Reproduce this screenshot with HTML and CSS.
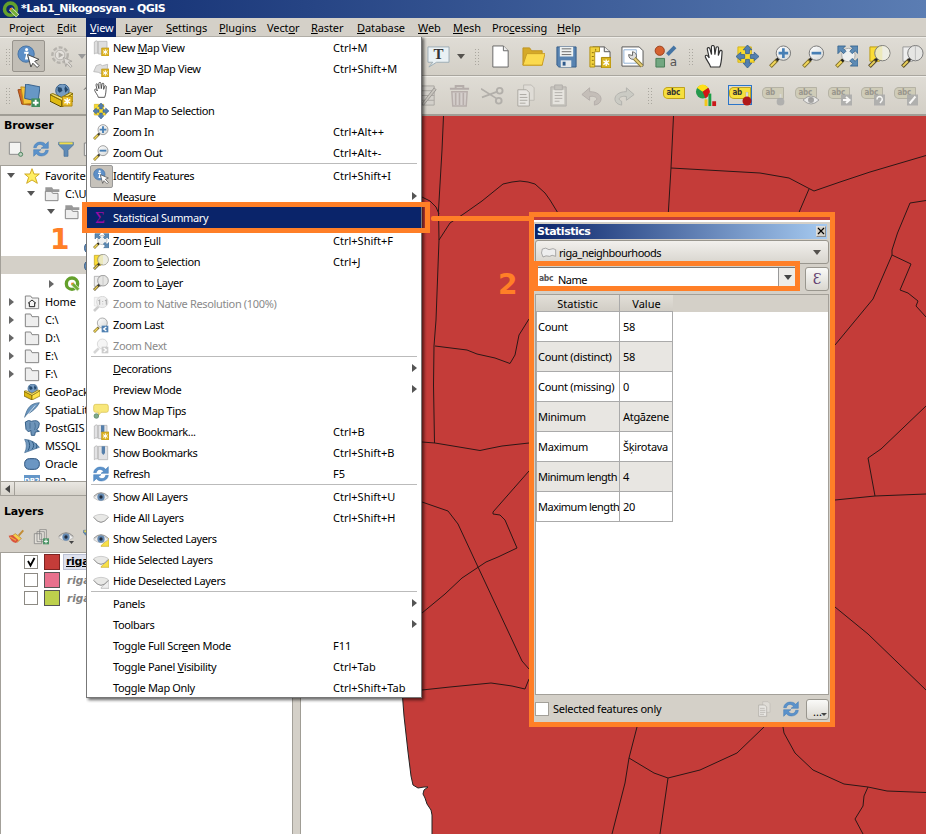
FILE: index.html
```html
<!DOCTYPE html>
<html lang="en">
<head>
<meta charset="utf-8">
<title>*Lab1_Nikogosyan - QGIS</title>
<link rel="stylesheet" href="styles.css">
</head>
<body>
<svg class="defs" aria-hidden="true">
  <defs>
    <linearGradient id="lens" x1="0" y1="0" x2="1" y2="1"><stop offset="0" stop-color="#fff"/><stop offset="1" stop-color="#d5d8d8"/></linearGradient>
    <symbol id="qgis" viewBox="0 0 24 24"><circle cx="12" cy="11.500" r="8.500" fill="none" stroke="#64a02c" stroke-width="5"/><path d="M12 11l10 10" stroke="#d9e6c8" stroke-width="6"/><path d="M13 12l8.500 8.500" stroke="#73ae35" stroke-width="4"/><path d="M11 10h4l-4 4z" fill="#ee7913"/></symbol>
    <symbol id="identify" viewBox="0 0 24 24"><circle cx="9.500" cy="9.500" r="8.500" fill="#5d8fc7" stroke="#4573a5"/><circle cx="10" cy="4.800" r="1.600" fill="#fff"/><path d="M7.500 8h3.500l-1.500 6h2" fill="none" stroke="#fff" stroke-width="2"/><path d="M11 10l12 5-4.500 2 4.500 4.500-2 2-4.500-4.500-2 4z" fill="#fff" stroke="#444"/></symbol>
    <symbol id="gear" viewBox="0 0 24 24"><circle cx="10.500" cy="10.500" r="8" fill="#d8d5cf" stroke="#b5b2ac" stroke-width="2.500" stroke-dasharray="4 2"/><circle cx="10.500" cy="10.500" r="5" fill="#e4e1dc" stroke="#b5b2ac"/><path d="M9 7.500l5 3-5 3z" fill="#b0ada7"/><path d="M14 13l9 4-4 1 4 4-1.500 1.500-4-4-1 3z" fill="#dedbd6" stroke="#aaa7a2"/></symbol>
    <symbol id="zin" viewBox="0 0 24 24"><path d="M1.500 22.500l7-7" stroke="#80712d" stroke-width="4"/><path d="M2 22l5-5" stroke="#f4d95b" stroke-width="2"/><path d="M8 16l3-3" stroke="#222" stroke-width="3"/><circle cx="15" cy="8.500" r="7.500" fill="url(#lens)" stroke="#777"/><path d="M15 3.500v10M10 8.500h10" stroke="#477fb5" stroke-width="2.800"/></symbol>
    <symbol id="zout" viewBox="0 0 24 24"><path d="M1.500 22.500l7-7" stroke="#80712d" stroke-width="4"/><path d="M2 22l5-5" stroke="#f4d95b" stroke-width="2"/><path d="M8 16l3-3" stroke="#222" stroke-width="3"/><circle cx="15" cy="8.500" r="7.500" fill="url(#lens)" stroke="#777"/><path d="M10 8.500h10" stroke="#477fb5" stroke-width="2.800"/></symbol>
    <symbol id="zfull" viewBox="0 0 24 24"><path d="M1.500 22.500l7-7" stroke="#80712d" stroke-width="4"/><path d="M2 22l5-5" stroke="#f4d95b" stroke-width="2"/><path d="M7 17l3-3" stroke="#222" stroke-width="3"/><circle cx="14" cy="10.500" r="7" fill="#eef0f0" stroke="#aaa"/><path d="M3 1h8l-2.500 2.500 3 3-2.500 2.500-3-3L3 9zM24 1h-8l2.500 2.500-3 3 2.500 2.500 3-3L24 9zM24 22h-8l2.500-2.500-3-3 2.500-2.500 3 3 3-3z" fill="#5d8bb5" stroke="#315e88" stroke-width=".8"/></symbol>
    <symbol id="zsel" viewBox="0 0 24 24"><path d="M2 2h10v15H2z" fill="#fbdd35" stroke="#ba9c17"/><path d="M1.500 22.500l7-7" stroke="#574b29" stroke-width="4"/><path d="M2 22l5-5" stroke="#e9cf58" stroke-width="2"/><path d="M8 16l3-3" stroke="#222" stroke-width="3"/><circle cx="15" cy="8.500" r="8" fill="#ece9bb" stroke="#777"/><path d="M15 1a7.500 7.500 0 0 1 0 15z" fill="#eee" opacity=".8"/></symbol>
    <symbol id="zlayer" viewBox="0 0 24 24"><path d="M2 2h10v15H2z" fill="#eee" stroke="#999"/><path d="M1.500 22.500l7-7" stroke="#574b29" stroke-width="4"/><path d="M2 22l5-5" stroke="#e9cf58" stroke-width="2"/><path d="M8 16l3-3" stroke="#222" stroke-width="3"/><circle cx="15" cy="8.500" r="8" fill="#e6e6e4" stroke="#777"/><path d="M15 1v15" stroke="#bbb"/></symbol>
    <symbol id="znative" viewBox="0 0 24 24"><path d="M1.500 22.500l7-7" stroke="#ccc" stroke-width="4"/><path d="M2 2h8v13H2z" fill="#f4f4f4" stroke="#ddd"/><circle cx="14" cy="9" r="8.500" fill="#eee" stroke="#ccc"/><path d="M8 7l2-1v7M18 7l2-1v7M14.500 8v1M14.500 11.500v1" fill="none" stroke="#aaa" stroke-width="1.600"/></symbol>
    <symbol id="zlast" viewBox="0 0 24 24"><path d="M1.500 22.500l7-7" stroke="#80712d" stroke-width="4"/><path d="M2 22l5-5" stroke="#f4d95b" stroke-width="2"/><circle cx="14" cy="9" r="7.500" fill="url(#lens)" stroke="#888"/><path d="M13 13h10v10H13z" fill="#4f80b2"/><path d="M20 15l-4 3 4 3" fill="none" stroke="#fff" stroke-width="2"/></symbol>
    <symbol id="znext" viewBox="0 0 24 24"><path d="M1.500 22.500l7-7" stroke="#d5d5d5" stroke-width="4"/><circle cx="14" cy="9" r="7.500" fill="#f5f5f5" stroke="#ccc"/><path d="M13 13h10v10H13z" fill="#ccc"/><path d="M16 15l4 3-4 3" fill="none" stroke="#fff" stroke-width="2"/></symbol>
    <symbol id="hand" viewBox="0 0 24 24"><path d="M8 23c-1-4-4.500-7-5.500-10.500-.5-2.500 2-2.500 4 1L4.500 4.500c-.4-2 2.200-2.500 2.700-.5l1.700 6L8.800 2c0-2 2.900-2 3 0l.6 8 1.200-7c.3-1.800 2.700-1.500 2.600.3L16 11l1.500-4.500c.6-1.600 2.600-1 2.400.7-.4 5-.4 11-2.400 15.800z" fill="#fff" stroke="#333" stroke-width="1.200"/></symbol>
    <symbol id="pan" viewBox="0 0 24 24"><path d="M2 2h14v9h3v7H2z" fill="#f7da2f" stroke="#d4b41b"/><path d="M12 0l4.500 5H14v4h-4V5H7.500zM12 24l4.500-5H14v-4h-4v4H7.500zM0 12l5-4.500V10h4v4H5v2.500zM24 12l-5-4.500V10h-4v4h4v2.500z" fill="#5480b0" stroke="#315d8d" stroke-width=".8"/></symbol>
    <symbol id="mapnew" viewBox="0 0 24 24"><path d="M2 3q3-3 5-1v18q-3-1-5 1zM8 2h13v19H8z" fill="#dedede" stroke="#aaa"/><path d="M13 12h11v12H13z" fill="#dfb525" stroke="#b89112"/><path d="M18.500 14v8M15 16l7 4M22 16l-7 4" stroke="#fff" stroke-width="1.500"/></symbol>
    <symbol id="mapnew3" viewBox="0 0 24 24"><path d="M1 16l4-9 6-2 3 2 8-2-1 13-9 1-4-2z" fill="#dedede" stroke="#aaa"/><path d="M13 12h11v12H13z" fill="#dfb525" stroke="#b89112"/><path d="M18.500 14v8M15 16l7 4M22 16l-7 4" stroke="#fff" stroke-width="1.500"/></symbol>
    <symbol id="bookmark" viewBox="0 0 24 24"><path d="M2 3q3-3 5-1v19q-3-1-5 1zM8 2h14v20H8z" fill="#e2e2e4" stroke="#aaa"/><path d="M13 2h5v10l-2.500 3-2.500-3z" fill="#557fab"/></symbol>
    <symbol id="booknew" viewBox="0 0 24 24"><path d="M2 3q3-3 5-1v19q-3-1-5 1zM8 2h13v20H8z" fill="#e2e2e4" stroke="#aaa"/><path d="M12 2h5v9l-2.500 3-2.500-3z" fill="#557fab"/><path d="M13 12h11v12H13z" fill="#dfb525" stroke="#b89112"/><path d="M18.500 14v8M15 16l7 4M22 16l-7 4" stroke="#fff" stroke-width="1.500"/></symbol>
    <symbol id="tips" viewBox="0 0 24 24"><path d="M4 2h16q3 0 3 3v6q0 3-3 3h-8l-4 5v-5H4q-3 0-3-3V5q0-3 3-3z" fill="#f8e77a" stroke="#d4bd48"/><circle cx="5" cy="19.500" r="3.500" fill="#7fa98a" stroke="#507e5c"/></symbol>
    <symbol id="refresh" viewBox="0 0 24 24"><path d="M1 10C2 1 14-1 19 5l4-4v10H12l4-3C11 3 6 5 5 10z" fill="#5b92cb" stroke="#427bb5" stroke-width=".8"/><path d="M23 14c-1 9-13 11-18 5l-4 4V13h11l-4 3c5 5 10 3 11-2z" fill="#5b92cb" stroke="#427bb5" stroke-width=".8"/></symbol>
    <symbol id="eye" viewBox="0 0 24 24"><path d="M1 13Q12 0 23 13 12 22 1 13z" fill="#eee" stroke="#aaa"/><circle cx="12" cy="12" r="5.500" fill="#6389b2"/><circle cx="12" cy="12" r="2.500" fill="#222c3c"/><path d="M1 11Q12 0 23 11" fill="none" stroke="#888" stroke-width="1.400"/></symbol>
    <symbol id="lid" viewBox="0 0 24 24"><path d="M2 9q10-5 20 0l1 2q-11 15-22 0z" fill="#e8e8e6" stroke="#bbb"/><path d="M1 11q11 15 22 0" fill="none" stroke="#999" stroke-width="1.500"/></symbol>
    <symbol id="yellowtag" viewBox="0 0 24 24"><path d="M12 22l12-11v12H12z" fill="#f7df48" stroke="#c5a927"/></symbol>
    <symbol id="greytag" viewBox="0 0 24 24"><path d="M12 22l12-11v12H12z" fill="#eee" stroke="#aaa"/></symbol>
    <symbol id="file" viewBox="0 0 24 24"><path d="M4 1h11l5 5v17H4z" fill="#fff" stroke="#666"/><path d="M15 1v5h5" fill="#eee" stroke="#666"/></symbol>
    <symbol id="open" viewBox="0 0 24 24"><path d="M1 21V3h7l2 3h11v15z" fill="#d5a928" stroke="#be9220"/><path d="M1 21L5 9h19l-3 12z" fill="#fbda4e" stroke="#c99d25"/></symbol>
    <symbol id="save" viewBox="0 0 24 24"><path d="M2 2h20v21H4l-2-2z" fill="#5783b1" stroke="#375e88"/><path d="M5 2h14v10H5z" fill="#eef2f2"/><path d="M7 4h10M7 7h10M7 10h10" stroke="#666"/><path d="M6 16h11v7H6z" fill="#e4e8ea"/><path d="M8 17.500h3v4H8z" fill="#2f5b8c"/></symbol>
    <symbol id="layout" viewBox="0 0 24 24"><path d="M5 2h12l6 5v15H5z" fill="#fff" stroke="#555"/><path d="M17 2v5h6" fill="#eee" stroke="#555"/><path d="M2 2h10v5H7v16H2z" fill="#f1d23e" stroke="#b28f12"/><path d="M4 8h2M4 12h2M4 16h2M4 20h2M8 4v2" stroke="#896d0d"/><path d="M14 13h10v11H14z" fill="#d9b521" stroke="#a98708"/><path d="M19 15v7M16 16.500l6 4M22 16.500l-6 4" stroke="#fff" stroke-width="1.400"/></symbol>
    <symbol id="wrench" viewBox="0 0 24 24"><path d="M1 2h18l4 4v16H1z" fill="#fff" stroke="#555"/><path d="M3 5h13v14H3z" fill="none" stroke="#8eafd3"/><path d="M8 10l4 1V7q5 1 4 6l-3 2q-5 0-5-5z" fill="#ddd" stroke="#666"/><path d="M14 14l8 8" stroke="#8b7a39" stroke-width="4"/><path d="M14 14l8 8" stroke="#e6cf78" stroke-width="2"/></symbol>
    <symbol id="styles" viewBox="0 0 24 24"><circle cx="6" cy="6" r="4.800" fill="#d6612f" stroke="#9b3d18"/><path d="M14 10l8-8" stroke="#4675a4" stroke-width="4"/><path d="M2 14h9v9H2z" fill="#72a781" stroke="#477b56"/></symbol>
    <symbol id="bubble" viewBox="0 0 24 24"><path d="M1 2h22v16H10l-8 5 4-5H1z" fill="#eaf1f4" stroke="#9cabb4"/></symbol>
    <symbol id="addlayer" viewBox="0 0 24 24"><path d="M1 6l10-1 3 17-9-1z" fill="#d36928" stroke="#984615"/><path d="M4 3l11 1 1 16-9 1z" fill="#f5c33a" stroke="#bd8b15"/><path d="M9 0l15 3-2 15-14-3z" fill="#6797c5" stroke="#355f8a"/><path d="M15 15h9v9h-9z" fill="#3f8d5c"/><path d="M19.500 16.500v6M16.500 19.500h6" stroke="#fff" stroke-width="2"/></symbol>
    <symbol id="box" viewBox="0 0 24 24"><circle cx="13" cy="7" r="7" fill="#759bc2" stroke="#355d87"/><path d="M8 3l4 1 1 3-3 2-2-2zM16 2l3 4-3 3-1-4z" fill="#24486c"/><path d="M0 11l12 6v7L0 18z" fill="#dfba12" stroke="#5a4700"/><path d="M12 17l12-7v8l-12 6z" fill="#ffe34a" stroke="#806906"/><path d="M0 11l3-1 9 4 9-5 3 1-12 7z" fill="#f7e26c" stroke="#806906"/></symbol>
    <symbol id="star" viewBox="0 0 24 24"><path d="M12 1l3 8h8l-6 5 3 9-8-5-8 5 3-9-6-5h8z" fill="#ffee62" stroke="#c99f13" stroke-width="1.300"/></symbol>
    <symbol id="folder" viewBox="0 0 24 24"><path d="M2 22V3h8l2 4h10v15z" fill="#eee" stroke="#858585" stroke-width="1.500"/></symbol>
    <symbol id="folder2" viewBox="0 0 24 24"><path d="M2 2h10l2 3h9v4H2z" fill="#999"/><path d="M2 22V8h9l2 3h8v11z" fill="#eee" stroke="#888" stroke-width="1.500"/></symbol>
    <symbol id="home" viewBox="0 0 24 24"><path d="M2 22V3h8l2 3h10v16z" fill="#f4f4f4" stroke="#777" stroke-width="1.300"/><path d="M6 14l6-5 6 5M8 13v6h8v-6" fill="none" stroke="#222" stroke-width="1.500"/></symbol>
    <symbol id="newdoc" viewBox="0 0 24 24"><path d="M2 2h17v18H2z" fill="#f4f4f2" stroke="#888" stroke-width="1.400"/><circle cx="19" cy="20" r="3" fill="#bed0bf" stroke="#4e8560" stroke-width="1.500"/></symbol>
    <symbol id="filter" viewBox="0 0 24 24"><path d="M1 2h22v4l-8 8v9H9v-9L1 6z" fill="#608bb6" stroke="#426b95"/><path d="M2 2h20v3H2z" fill="#f1dd4b"/></symbol>
    <symbol id="feather" viewBox="0 0 24 24"><path d="M1 23C5 7 11 2 23 1 20 8 12 15 5 18z" fill="#6a96bf" stroke="#365f84"/><path d="M2 23L17 5" stroke="#fff"/></symbol>
    <symbol id="postgis" viewBox="0 0 24 24"><path d="M2 3q5-4 9-1 10-3 12 3 0 6-4 10l4 2-6 1-1 5h-5l-1-8-3 3-4-4z" fill="#6d94b9" stroke="#365f87" stroke-width="1.500"/><path d="M9 4v9M16 4q2 5 0 11" fill="none" stroke="#365f87"/></symbol>
    <symbol id="mssql" viewBox="0 0 24 24"><path d="M1 2q14 1 22 12L1 22q5-10 0-20z" fill="#6f97bd" stroke="#416a91"/><path d="M6 3q5 8 0 16M12 5q5 6 0 12M18 8q3 4 0 8" fill="none" stroke="#305b82" stroke-width="1.500"/></symbol>
    <symbol id="oracle" viewBox="0 0 24 24"><rect x="1" y="4" width="22" height="16" rx="7" fill="#6b96c3" stroke="#284f7a" stroke-width="1.500"/></symbol>
    <symbol id="brush" viewBox="0 0 24 24"><path d="M16 10l7-8" stroke="#c28c35" stroke-width="3"/><path d="M11 7l9 7-6 6L5 11z" fill="#f6d04a" stroke="#b57b25"/><path d="M1 10l6-1 9 8-4 4q-8-2-11-11z" fill="#d9533e"/><path d="M3 12l9 5" stroke="#eda63d" stroke-width="2"/></symbol>
    <symbol id="addgroup" viewBox="0 0 24 24"><path d="M2 7h11v15H2zM6 4h11v15H6zM10 1h10v15H10z" fill="#e2dfd8" stroke="#777"/><path d="M15 14h9v9h-9z" fill="#4d9466"/><path d="M19.500 15.500v6M16.500 18.500h6" stroke="#fff" stroke-width="1.500"/></symbol>
    <symbol id="edit" viewBox="0 0 24 24"><path d="M2 2h18v20H2zM2 7h18M2 12h18M2 17h18" fill="#d3d0ca" stroke="#aaa7a2"/><path d="M7 21L20 4l2 2L9 22z" fill="#c7c4bd" stroke="#9b9893"/></symbol>
    <symbol id="trash" viewBox="0 0 24 24"><path d="M2 5h20M8 5V2h8v3" stroke="#b5adaa" stroke-width="2" fill="none"/><path d="M4 8h16l-1 15H5z" fill="#d5cfcc" stroke="#b7aeab" stroke-width="1.500"/><path d="M8 9v13M12 9v13M16 9v13" stroke="#b7aeab" stroke-width="1.700"/></symbol>
    <symbol id="cut" viewBox="0 0 24 24"><path d="M0 5l16 10M1 14l16-6" stroke="#b2afaa" stroke-width="1.800"/><circle cx="19.500" cy="7" r="3" fill="none" stroke="#b2afaa" stroke-width="2"/><circle cx="18.500" cy="17.500" r="3" fill="none" stroke="#b2afaa" stroke-width="2"/></symbol>
    <symbol id="copy" viewBox="0 0 24 24"><path d="M10 1h8l3 3v13H10z" fill="#dfdcd6" stroke="#bebbb5"/><path d="M4 6h9l3 3v14H4z" fill="#e8e6e2" stroke="#aaa7a1"/><path d="M6 11h7M6 14h8M6 17h8M6 20h6" stroke="#aaa7a1"/></symbol>
    <symbol id="paste" viewBox="0 0 24 24"><path d="M4 3h16v20H4z" fill="#c8c5bf" stroke="#b2afaa"/><path d="M6 6h12v15H6z" fill="#e6e4df"/><path d="M8 1h8v5H8zM8 9h8M8 12h8M8 15h8M8 18h5" fill="#c5c2bc" stroke="#b2afaa"/></symbol>
    <symbol id="undo" viewBox="0 0 24 24"><path d="M2 11l8-7v4c15 0 15 13 5 14v-4c5-2 2-6-5-5v4z" fill="#c4beb8" stroke="#b4aea9"/></symbol>
    <symbol id="redo" viewBox="0 0 24 24"><path d="M22 11l-8-7v4C-1 8-1 21 9 22v-4c-5-2-2-6 5-5v4z" fill="#cbcbc4" stroke="#b2b2ac"/></symbol>
    <symbol id="diagram" viewBox="0 0 24 24"><circle cx="8" cy="8" r="7" fill="#26994d"/><path d="M8 8L2 4q6-7 12 0z" fill="#ffdf19"/><path d="M8 8l6-4q4 6-3 11z" fill="#d51414"/><path d="M10 16h3v7h-3z" fill="#f3c719"/><path d="M14 10h3v13h-3z" fill="#1b9e45"/><path d="M18 18h4v5h-4z" fill="#c91919"/></symbol>
    <symbol id="poly" viewBox="0 0 24 16"><path d="M2 2q5-3 10 1 7-3 10 0v10q-6-3-9 0-6-2-10 1-4-6-1-12z" fill="#eee" stroke="#888"/></symbol>
    <symbol id="plus" viewBox="0 0 24 24"><path d="M13 13h10v10H13z" fill="#e8bd28" stroke="#af8610"/><path d="M18 14.500v7M15 16l6 4M21 16l-6 4" stroke="#fff" stroke-width="1.400"/></symbol>
  </defs>
</svg>

<div class="app">
  <header class="titlebar"><svg class="logo"><use href="#qgis"/></svg><span>*Lab1_Nikogosyan - QGIS</span></header>
  <nav class="menubar">
    <span>Pro<u>j</u>ect</span><span><u>E</u>dit</span><span class="open"><u>V</u>iew</span><span><u>L</u>ayer</span><span><u>S</u>ettings</span><span><u>P</u>lugins</span><span>Vect<u>o</u>r</span><span><u>R</u>aster</span><span><u>D</u>atabase</span><span><u>W</u>eb</span><span><u>M</u>esh</span><span>Pro<u>c</u>essing</span><span><u>H</u>elp</span>
  </nav>

  <div class="toolbar">
    <div class="tools-left">
      <i class="grip"></i>
      <span class="tool pressed"><svg><use href="#identify"/></svg></span>
      <span class="tool"><svg><use href="#gear"/></svg></span>
      <i class="caret dim"></i>
    </div>
    <div class="tools-right">
      <span class="tool glyph"><svg><use href="#bubble"/></svg><b class="serif">T</b></span>
      <i class="caret wide"></i>
      <i class="grip"></i>
      <span class="tool"><svg><use href="#file"/></svg></span>
      <span class="tool"><svg><use href="#open"/></svg></span>
      <span class="tool"><svg><use href="#save"/></svg></span>
      <span class="tool"><svg><use href="#layout"/></svg></span>
      <span class="tool"><svg><use href="#wrench"/></svg></span>
      <span class="tool glyph"><svg><use href="#styles"/></svg><b class="small-a">a</b></span>
      <i class="grip broad"></i>
      <span class="tool"><svg><use href="#hand"/></svg></span>
      <span class="tool"><svg><use href="#pan"/></svg></span>
      <span class="tool"><svg><use href="#zin"/></svg></span>
      <span class="tool"><svg><use href="#zout"/></svg></span>
      <span class="tool"><svg><use href="#zfull"/></svg></span>
      <span class="tool"><svg><use href="#zsel"/></svg></span>
      <span class="tool"><svg><use href="#zlayer"/></svg></span>
    </div>
  </div>

  <div class="toolbar second">
    <div class="tools-left">
      <i class="grip"></i>
      <span class="tool"><svg><use href="#addlayer"/></svg></span>
      <span class="tool"><svg><use href="#box"/><use href="#plus"/></svg></span>
      <span class="tool"><svg viewBox="0 0 24 24"><path d="M1 6l4-4 7 9 8-6" fill="none" stroke="#555"/></svg></span>
    </div>
    <div class="tools-right">
      <span class="tool"><svg><use href="#edit"/></svg></span>
      <span class="tool"><svg><use href="#trash"/></svg></span>
      <span class="tool"><svg><use href="#cut"/></svg></span>
      <span class="tool"><svg><use href="#copy"/></svg></span>
      <span class="tool"><svg><use href="#paste"/></svg></span>
      <span class="tool"><svg><use href="#undo"/></svg></span>
      <span class="tool"><svg><use href="#redo"/></svg></span>
      <i class="grip broad"></i>
      <span class="tool"><span class="tag">abc</span></span>
      <span class="tool"><svg><use href="#diagram"/></svg></span>
      <span class="tool"><span class="framed"><span class="tag">ab</span><svg class="badge" viewBox="0 0 10 14"><path d="M4 0h2v6H4z" fill="#eee" stroke="#999" stroke-width=".5"/><circle cx="5" cy="9" r="4.500" fill="#b01818"/></svg></span></span>
      <span class="tool off"><span class="tag">ab</span><svg class="badge" viewBox="0 0 10 14"><path d="M4 0h2v6H4z" fill="#ddd"/><circle cx="5" cy="9" r="4.500" fill="#aaa"/></svg></span>
      <span class="tool off"><span class="tag">abc</span><svg class="badge eye-badge" viewBox="0 0 16 10"><path d="M0 5q8-8 16 0-8 8-16 0z" fill="#eee" stroke="#999"/><circle cx="8" cy="5" r="3" fill="#999"/></svg></span>
      <span class="tool off"><span class="tag">abc</span><svg class="badge" viewBox="0 0 11 11"><path d="M0 0h11v11H0z" fill="#aaa"/><path d="M2 5.500h5M5 2.500l3.500 3-3.500 3" fill="none" stroke="#fff" stroke-width="2"/></svg></span>
      <span class="tool off"><span class="tag">abc</span><svg class="badge" viewBox="0 0 11 11"><path d="M0 0h11v11H0z" fill="#aaa"/><path d="M3 5q0-3 3-3 3 1 2 4L6 8.500" fill="none" stroke="#fff" stroke-width="1.500"/></svg></span>
      <span class="tool off"><span class="tag">abc</span><svg class="badge" viewBox="0 0 11 11"><path d="M0 0h11v11H0z" fill="#aaa"/><path d="M2.500 9l6-7" stroke="#fff" stroke-width="2"/></svg></span>
    </div>
  </div>

  <main class="workspace">
    <aside class="dock">
      <h2 class="dock-title">Browser</h2>
      <div class="dock-tools"><svg><use href="#newdoc"/></svg><svg><use href="#refresh"/></svg><svg><use href="#filter"/></svg><svg><use href="#folder"/></svg></div>
      <div class="tree browser">
        <div class="row"><i class="down"></i><svg><use href="#star"/></svg><span>Favorites</span></div>
        <div class="row l1"><i class="down"></i><svg><use href="#folder2"/></svg><span>C:\Us</span></div>
        <div class="row l2"><i class="down"></i><svg><use href="#folder2"/></svg></div>
        <div class="row"></div>
        <div class="row l3"><svg><use href="#oracle"/></svg></div>
        <div class="row l3 current"><svg><use href="#oracle"/></svg></div>
        <div class="row l2"><i class="right"></i><svg><use href="#qgis"/></svg></div>
        <div class="row"><i class="right"></i><svg><use href="#home"/></svg><span>Home</span></div>
        <div class="row"><i class="right"></i><svg><use href="#folder"/></svg><span>C:\</span></div>
        <div class="row"><i class="right"></i><svg><use href="#folder"/></svg><span>D:\</span></div>
        <div class="row"><i class="right"></i><svg><use href="#folder"/></svg><span>E:\</span></div>
        <div class="row"><i class="right"></i><svg><use href="#folder"/></svg><span>F:\</span></div>
        <div class="row"><i></i><svg><use href="#box"/></svg><span>GeoPack</span></div>
        <div class="row"><i></i><svg><use href="#feather"/></svg><span>SpatiaLit</span></div>
        <div class="row"><i></i><svg><use href="#postgis"/></svg><span>PostGIS</span></div>
        <div class="row"><i></i><svg><use href="#mssql"/></svg><span>MSSQL</span></div>
        <div class="row"><i></i><svg><use href="#oracle"/></svg><span>Oracle</span></div>
        <div class="row"><i></i><b class="db2">DB2</b><span>DB2</span></div>
      </div>
      <div class="scrollbar"><span class="scroll-btn"></span></div>
      <h2 class="dock-title layers-title">Layers</h2>
      <div class="dock-tools layer-tools"><svg><use href="#brush"/></svg><svg><use href="#addgroup"/></svg><svg><use href="#eye"/><path d="M11 12h5l-2.500 3z" fill="#444"/></svg><svg><use href="#filter"/></svg></div>
      <div class="tree layers">
        <div class="layer active"><span class="check"><svg viewBox="0 0 12 12"><path d="M3 5l2.500 4.500L9.500 2" fill="none" stroke="#000" stroke-width="1.800"/></svg></span><i class="swatch red"></i><b>riga_</b></div>
        <div class="layer"><span class="check"></span><i class="swatch pink"></i><em>riga_</em></div>
        <div class="layer"><span class="check"></span><i class="swatch lime"></i><em>riga_</em></div>
      </div>
    </aside>
    <section class="map">
      <svg class="canvas" viewBox="301 116 625 718">
        <path class="land" d="M380 110H930V838H432V815L431 810 427 804 425 798 423 794 424 790 428 787 424 787 418 788 413 785 411 776 408 752 404 716 402 690 380 600z"/>
        <g class="bounds">
          <path d="M443.500 116L442 150 438.500 210 439 240 436 320 434 346 433.500 385 434.500 443M422 197L430 201 436 207 439 214M439 240L450 223 465 213 482 201 503 184 512 182 520 181 528 182 535 184 545 193 550 200 561 218"/>
          <path d="M435 346L467 350 477 354 495 358 510 363.500 515 355 519 335 529 319M422 442L435 443 480 450.500 487 449 502 446 529 443M529 471L493 512V514L500 515 505 520 517 548 498 557 486 562 462 578 445 594 422 613"/>
          <path d="M422 502L448 511 458 524 478 567 522 661 529 669M422 690L450 687 491 683 512 686 525 689 529 679M673.500 116L671 168 668 218M671 168L760 173 789 178 809 188.500 814 191 840 182 870 172 926 155.500M809 189L800 210 795 222"/>
          <path d="M926 200.500L910 203 897.500 233 892 250V255L873 299 835 345M892 255L911 264 900 290 908 293 918 301 916 306 926 317M926 406L881 449 868 458 875 496 835 500M875 496L926 494M835 607L868 634 926 690"/>
          <path d="M637 727L629 758 625 783 612 834M629 758L654 773 668 778 700 770 737 753 764 727M668 778L660 834M783 727L784 733 795 753 813 770 844 784 868 787 887 791 926 792.500M868 787L864 796 863 806 855 819 863 834"/>
        </g>
      </svg>
    </section>
  </main>

  <div class="view-menu">
    <div class="item"><svg><use href="#mapnew"/></svg><span>New <u>M</u>ap View</span><kbd>Ctrl+M</kbd></div>
    <div class="item"><svg><use href="#mapnew3"/></svg><span>New <u>3</u>D Map View</span><kbd>Ctrl+Shift+M</kbd></div>
    <div class="item"><svg><use href="#hand"/></svg><span>Pan Map</span></div>
    <div class="item"><svg><use href="#pan"/></svg><span>Pan Map to Selection</span></div>
    <div class="item"><svg><use href="#zin"/></svg><span>Zoom In</span><kbd>Ctrl+Alt++</kbd></div>
    <div class="item"><svg><use href="#zout"/></svg><span>Zoom Out</span><kbd>Ctrl+Alt+-</kbd></div>
    <hr>
    <div class="item checked"><svg><use href="#identify"/></svg><span>Identify Features</span><kbd>Ctrl+Shift+I</kbd></div>
    <div class="item sub"><span>Measure</span></div>
    <div class="item selected"><b class="sigma">Σ</b><span>Statistical Summary</span></div>
    <hr>
    <div class="item"><svg><use href="#zfull"/></svg><span>Zoom <u>F</u>ull</span><kbd>Ctrl+Shift+F</kbd></div>
    <div class="item"><svg><use href="#zsel"/></svg><span>Zoom to <u>S</u>election</span><kbd>Ctrl+J</kbd></div>
    <div class="item"><svg><use href="#zlayer"/></svg><span>Zoom to <u>L</u>ayer</span></div>
    <div class="item disabled"><svg><use href="#znative"/></svg><span>Zoom to Native Resolution (100%)</span></div>
    <div class="item"><svg><use href="#zlast"/></svg><span>Zoom Last</span></div>
    <div class="item disabled"><svg><use href="#znext"/></svg><span>Zoom Next</span></div>
    <hr>
    <div class="item sub"><span><u>D</u>ecorations</span></div>
    <div class="item sub"><span>Preview Mode</span></div>
    <div class="item"><svg><use href="#tips"/></svg><span>Show Map Tips</span></div>
    <div class="item"><svg><use href="#booknew"/></svg><span>New Bookmark...</span><kbd>Ctrl+B</kbd></div>
    <div class="item"><svg><use href="#bookmark"/></svg><span>Show Bookmarks</span><kbd>Ctrl+Shift+B</kbd></div>
    <div class="item"><svg><use href="#refresh"/></svg><span>Refresh</span><kbd>F5</kbd></div>
    <hr>
    <div class="item"><svg><use href="#eye"/></svg><span>Show All Layers</span><kbd>Ctrl+Shift+U</kbd></div>
    <div class="item"><svg><use href="#lid"/></svg><span>Hide All Layers</span><kbd>Ctrl+Shift+H</kbd></div>
    <div class="item"><svg><use href="#yellowtag"/><use href="#eye"/></svg><span>Show Selected Layers</span></div>
    <div class="item"><svg><use href="#yellowtag"/><use href="#lid"/></svg><span>Hide Selected Layers</span></div>
    <div class="item"><svg><use href="#greytag"/><use href="#lid"/></svg><span>Hide Deselected Layers</span></div>
    <hr>
    <div class="item sub"><span>Panels</span></div>
    <div class="item sub"><span>Toolbars</span></div>
    <div class="item"><span>Toggle Full Scr<u>e</u>en Mode</span><kbd>F11</kbd></div>
    <div class="item"><span>Toggle Panel <u>V</u>isibility</span><kbd>Ctrl+Tab</kbd></div>
    <div class="item"><span>Toggle Map Only</span><kbd>Ctrl+Shift+Tab</kbd></div>
  </div>

  <section class="stats">
    <header class="stats-title"><span>Statistics</span><button class="close"><svg viewBox="0 0 8 8"><path d="M1 1l6 6M7 1L1 7" stroke="#000" stroke-width="1.200"/></svg></button></header>
    <div class="combo"><svg><use href="#poly"/></svg><span>riga_neighbourhoods</span><i class="caret"></i></div>
    <div class="field-row">
      <div class="field"><b>abc</b><span>Name</span><i class="drop"></i></div>
      <button class="epsilon">Ɛ</button>
    </div>
    <div class="table-frame">
      <table>
        <thead><tr><th>Statistic</th><th>Value</th></tr></thead>
        <tbody>
          <tr><td>Count</td><td>58</td></tr>
          <tr><td>Count (distinct)</td><td>58</td></tr>
          <tr><td>Count (missing)</td><td>0</td></tr>
          <tr><td>Minimum</td><td>Atgāzene</td></tr>
          <tr><td>Maximum</td><td>Šķirotava</td></tr>
          <tr><td class="tight">Minimum length</td><td>4</td></tr>
          <tr><td class="tight">Maximum length</td><td>20</td></tr>
        </tbody>
      </table>
    </div>
    <footer class="stats-foot"><i class="box"></i><span>Selected features only</span><svg><use href="#copy"/></svg><svg><use href="#refresh"/></svg><button class="more">...</button></footer>
  </section>

  <div class="mark mark-item"></div>
  <div class="mark-link"></div>
  <div class="mark mark-field"></div>
  <div class="num one">1</div>
  <div class="num two">2</div>
</div>
</body>
</html>
```
FILE: styles.css
```css
* { box-sizing: border-box; }
body { margin: 0; overflow: hidden; font: 11px/14px "Noto Sans", sans-serif; color: #000; }
.defs { position: absolute; width: 0; height: 0; }
u { text-underline-offset: 1px; text-decoration-thickness: 1px; }
button { padding: 0; font: inherit; }

.app { position: relative; width: 926px; height: 834px; overflow: hidden; background: #d4d0c8; display: grid; grid-template-rows: 18px 19px 39px 40px 718px; }

.titlebar { display: flex; align-items: center; gap: 2px; padding-left: 2px; color: #fff; font: bold 11px/18px "DejaVu Sans", sans-serif; letter-spacing: -0.5px; background: linear-gradient(90deg, #0c286d, #5b7db3); }
.logo { width: 17px; height: 17px; }
.menubar { display: grid; grid-template-columns: 48px 33px 35px 41px 53px 48px 44px 46px 61px 35px 39px 65px 1fr; padding-left: 5px; border-bottom: 1px solid #b0ada6; line-height: 19px; letter-spacing: -0.1px; }
.menubar span { padding-left: 4px; white-space: nowrap; }
.menubar .open { width: 30px; background: #0a246a; color: #fff; }

.toolbar { display: grid; grid-template-columns: 422px 1fr; background: linear-gradient(#dfdcd5, #d3cfc6); border-bottom: 1px solid #a9a69f; border-top: 1px solid #efede8; overflow: hidden; }
.toolbar.second { grid-template-columns: 410px 1fr; border-bottom: 2px solid #a09d95; }
.tools-left, .tools-right { display: flex; align-items: center; min-width: 0; padding-bottom: 1px; }
.tools-left { padding-left: 2px; }
.tool { position: relative; flex: 0 0 33px; height: 32px; display: flex; align-items: center; justify-content: center; }
.tool > svg:first-child { width: 23px; height: 23px; }
.pressed { background: #c2beb6; border: 1px solid #97938c; border-radius: 2px; }
.grip { flex: 0 0 10px; height: 17px; background: radial-gradient(circle, #aaa79f 0.8px, transparent 1px) 0 0 / 3px 3px; background-clip: content-box; padding: 0 2px; }
.tools-right .grip { flex-basis: 13px; margin-left: 4px; padding: 0 4px; }
.tools-right .grip.broad { flex-basis: 16px; margin-left: 0; padding: 0 5px 0 6px; }
.caret { flex: none; border: 4px solid transparent; border-top: 5px solid #55524e; border-bottom: 0; }
.caret.wide { margin: 0 2px; }
.caret.dim { border-top-color: #999; }
.glyph b { position: absolute; }
.serif { font: bold 15px/16px "Liberation Serif", serif; top: 6px; color: #333; }
.small-a { font: 12px/12px "DejaVu Sans", sans-serif; color: #555; right: 5px; bottom: 4px; }
.tag { width: 22px; height: 12px; margin-top: -5px; padding-left: 4px; background: #f6df3d; border-radius: 5px 1px 1px 5px; box-shadow: inset 0 0 0 1px #bfa220; font: bold 8px/11px "DejaVu Sans Condensed", "DejaVu Sans", sans-serif; letter-spacing: -0.3px; color: #333; flex: none; }
.framed { position: relative; display: flex; align-items: center; justify-content: center; width: 24px; height: 20px; border: 1px solid #2b75c9; }
.badge { position: absolute; width: 11px; height: 12px; right: 3px; bottom: 5px; }
.framed .badge { right: -1px; bottom: -2px; width: 10px; height: 14px; }
.eye-badge { width: 16px; }
.off .tag { background: #cfccb8; box-shadow: inset 0 0 0 1px #b5b2a5; color: #99968d; }
.off .badge { opacity: 0.85; }

.workspace { display: grid; grid-template-columns: 301px 1fr; }
.dock { display: flex; flex-direction: column; height: 718px; padding-right: 7px; border-right: 1px solid #a09d95; overflow: hidden; }
.dock-title { margin: 0; padding: 0 0 0 4px; height: 19px; flex: none; font: bold 11px/19px "DejaVu Sans", sans-serif; letter-spacing: -0.2px; }
.dock-tools { flex: none; display: flex; align-items: center; gap: 9px; height: 30px; padding: 0 0 2px 8px; }
.dock-tools svg { width: 16px; height: 16px; }
.tree { background: #fff; border: 1px solid #a3a099; border-bottom: 0; overflow: hidden; flex: none; }
.browser { height: 316px; }
.row { display: flex; align-items: center; height: 18px; padding-left: 5px; white-space: nowrap; padding-top: 1px; letter-spacing: -0.15px; }
.row > i { width: 10px; height: 10px; flex: none; display: grid; place-items: center; margin-right: 8px; }
.row > i::before { content: ""; border: 4px solid transparent; }
.row > i.down::before { border-top: 5px solid #555; border-bottom: 0; }
.row > i.right::before { border-left: 5px solid #666; border-right: 0; }
.row > svg { width: 16px; height: 16px; flex: none; margin-right: 5px; }
.l1 { padding-left: 25px; }
.l2 { padding-left: 45px; }
.l3 { padding-left: 83px; }
.row.current { background: #d4d0c8; }
.db2 { width: 16px; margin-right: 5px; background: #6496c8; color: #fff; font: bold 7px/13px "DejaVu Sans", sans-serif; }
.scrollbar { flex: none; height: 15px; background: linear-gradient(#e9e7e2, #d6d2ca); border: 1px solid #a3a099; }
.scroll-btn { display: grid; place-items: center; width: 14px; height: 13px; border-right: 1px solid #a3a099; }
.scroll-btn::before { content: ""; border: 4px solid transparent; border-right: 5px solid #444; border-left: 0; }
.layers-title { margin-top: 6px; }
.layer-tools { height: 31px; padding-bottom: 0; }
.layers { flex: 1; }
.layer { display: flex; align-items: center; height: 18px; padding-left: 23px; font-family: "DejaVu Sans", sans-serif; white-space: nowrap; }
.check { width: 14px; height: 14px; background: #fff; border: 1px solid #8d8a84; margin-right: 6px; display: grid; }
.swatch { width: 16px; height: 16px; border: 1px solid #555; margin-right: 3px; }
.red { background: #c43c39; border-color: #7b2422; }
.pink { background: #e8718d; }
.lime { background: #bdd04c; }
.layer b { background: #dfe2ee; border: 1px solid #bcc1d4; padding: 0 2px; text-decoration: underline; letter-spacing: -0.3px; }
.layer em { color: #808080; font-weight: bold; padding: 0 4px; font-size: 10.5px; }

.map { background: #fff; overflow: hidden; }
.canvas { display: block; width: 625px; height: 718px; }
.land { fill: #c43c39; stroke: #232323; stroke-width: 1; }
.bounds { fill: none; stroke: #2c1716; stroke-width: 1; }

.view-menu { position: absolute; left: 86px; top: 36px; width: 336px; height: 662px; overflow: hidden; background: #fff; border: 1px solid #777; clip-path: inset(1px -5px -5px 0); box-shadow: 2px 2px 3px #0009; }
.item { position: relative; display: grid; grid-template-columns: 20px 220px 1fr; align-items: center; height: 21px; padding: 1px 0 1px 6px; white-space: nowrap; }
.item > svg { width: 16px; height: 16px; }
.item > span { grid-column: 2; letter-spacing: -0.35px; }
.item kbd { font: inherit; grid-column: 3; }
.view-menu hr { margin: 0 4px; height: 2px; border: 0; border-top: 1px solid #bbb; }
.sub::after { content: ""; position: absolute; right: 4px; top: 6px; border: 4px solid transparent; border-left: 5px solid #555; border-right: 0; }
.disabled { color: #8a8a8a; }
.checked::before { content: ""; position: absolute; left: 3px; top: 0; width: 21px; height: 21px; background: #c6c2bb; border: 1px solid #999; border-radius: 2px; }
.checked > svg { position: relative; }
.selected { background: #0a246a; color: #fff; }
.sigma { font: 17px/17px "Liberation Serif", serif; color: #9c0aa4; padding-left: 2px; grid-column: 1; }

.stats { position: absolute; left: 529px; top: 212px; width: 306px; height: 515px; border: 5px solid #ff7f27; padding: 7px 1px 0; background: linear-gradient(#c43c39 3px, #fff 3px 5px, #d4d0c8 5px); }
.stats-title { display: flex; align-items: center; justify-content: space-between; width: 292px; height: 15px; padding: 0 1px 0 2px; color: #fff; font: bold 11px/15px "DejaVu Sans", sans-serif; letter-spacing: -0.5px; background: linear-gradient(90deg, #0a246a, #a6caf0); }
.close { width: 10px; height: 11px; display: grid; border: 1px outset #ddd; background: #d4d0c8; }
.combo { display: flex; align-items: center; gap: 2px; height: 24px; margin-top: 1px; padding: 1px 7px 0 5px; background: linear-gradient(#f2f0ed, #d8d5ce); border: 1px solid #99968e; border-radius: 3px; letter-spacing: -0.55px; }
.combo span { letter-spacing: -0.5px; }
.combo svg { width: 16px; height: 12px; }
.combo .caret { margin-left: auto; }
.field-row { display: flex; justify-content: space-between; padding: 3px 0 0 2px; height: 30px; }
.field { display: flex; align-items: center; width: 259px; height: 20px; margin-top: 0; padding-left: 2px; background: #fff; border-top: 1px solid #777; }
.field b { font: bold 8.500px/14px "DejaVu Sans Condensed", "DejaVu Sans", sans-serif; color: #555; width: 19px; letter-spacing: -0.3px; }
.field span { padding-top: 5px; letter-spacing: -0.5px; }
.drop { margin-left: auto; width: 18px; height: 20px; border-left: 1px solid #999; display: grid; place-items: center; background: #eeece8; }
.drop::before { content: ""; border: 4px solid transparent; border-top: 5px solid #444; border-bottom: 0; }
.epsilon { width: 24px; height: 24px; background: linear-gradient(#fafaf8, #dad7d0); border: 1px solid #99968e; border-radius: 3px; font: 14px/17px "DejaVu Serif", serif; color: #613c6f; }
.table-frame { height: 401px; border: 1px solid #a3a099; background: linear-gradient(#d4d0c8 17px, #fff 17px); }
table { border-collapse: separate; border-spacing: 0; table-layout: fixed; width: 137px; }
th { height: 17px; padding: 2px 0 0; font-weight: normal; line-height: 14px; border-right: 1px solid #aaa; border-bottom: 1px solid #aaa; background: linear-gradient(#e2dfd8, #d1cdc5); }
th:first-child { width: 84px; }
th:last-child { border-right: 0; }
td { height: 30px; padding: 1px 0 0 2px; border-right: 1px solid #aaa; border-bottom: 1px solid #aaa; background: #fff; white-space: nowrap; overflow: hidden; letter-spacing: -0.3px; }
td:first-child { border-left: 1px solid #aaa; padding-left: 1px; }
td.tight { letter-spacing: -0.5px; }
td + td { padding-left: 3px; }
tr:nth-child(even) td { background: #e8e6e2; }
.stats-foot { display: flex; align-items: center; height: 27px; padding-top: 1px; }
.box { width: 14px; height: 14px; background: #fff; border: 1px solid #a3a099; margin-right: 4px; }
.stats-foot span { width: 203px; padding-top: 0; letter-spacing: -0.25px; }
.stats-foot svg { width: 16px; height: 16px; margin-right: 11px; }
.more { width: 23px; height: 21px; margin-left: -4px; background: linear-gradient(#fafaf8, #dad7d0); border: 1px solid #99968e; border-radius: 3px; position: relative; padding-top: 5px; }
.more::after { content: ""; position: absolute; right: 1px; bottom: 3px; border: 3px solid transparent; border-top: 3px solid #444; border-bottom: 0; }

.mark { position: absolute; border: 5px solid #ff7f27; }
.mark-item { left: 82px; top: 202px; width: 348px; height: 31px; }
.mark-field { left: 533px; top: 261px; width: 267px; height: 30px; }
.mark-link { position: absolute; left: 431px; top: 216px; width: 101px; height: 5px; background: #ff7f27; border-radius: 2px; }
.num { position: absolute; font: bold 28px/28px "DejaVu Sans", sans-serif; color: #ff7f27; }
.one { left: 50px; top: 226px; }
.two { left: 498px; top: 271px; }
```
